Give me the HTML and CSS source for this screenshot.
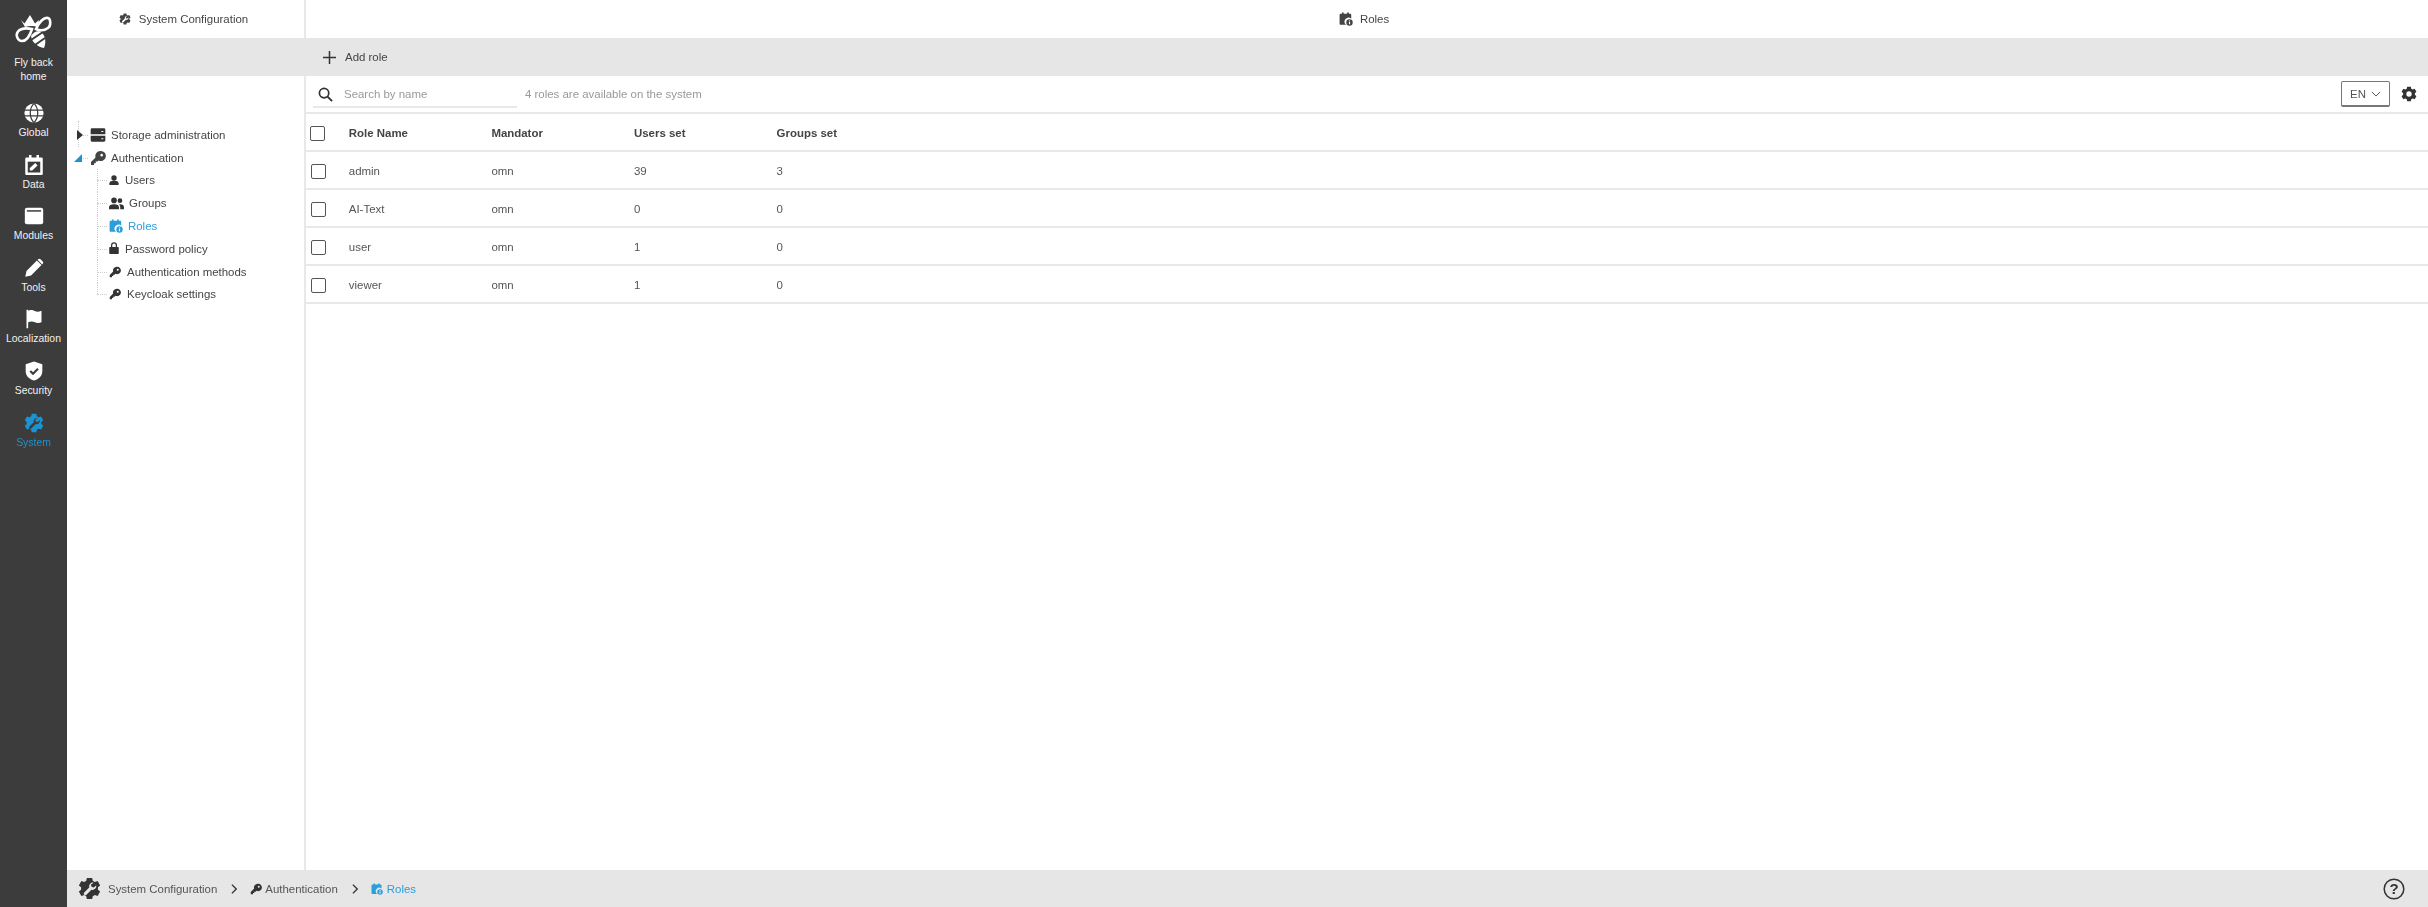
FILE: index.html
```html
<!DOCTYPE html>
<html lang="en">
<head>
<meta charset="utf-8">
<title>Roles</title>
<link rel="stylesheet" href="styles.css">
</head>
<body>
<svg class="defs" width="0" height="0">
  <defs>
    <symbol id="i-key" viewBox="0 0 24 24"><path d="M15.500 1.500a7.500 7.500 0 0 0-7.200 9.700L1.500 18v4.500H6v-2.600h2.600v-2.600h2.600l1.600-1.700a7.500 7.500 0 1 0 2.700-14.100zm2 4.200a2 2 0 1 1 0 4 2 2 0 0 1 0-4z"/></symbol>
    <symbol id="i-roles" viewBox="0 0 24 24"><path d="M5 1h3v2h6V1h3v2h2a2 2 0 0 1 2 2v6.200a6.500 6.500 0 0 0-8.800 10.800H3a2 2 0 0 1-2-2V5a2 2 0 0 1 2-2h2z"/><circle cx="18" cy="18" r="5.500"/><rect x="17" y="17" width="2" height="4" fill="#fff"/><rect x="17" y="14.500" width="2" height="1.600" fill="#fff"/></symbol>
    <symbol id="i-gear" viewBox="0 0 24 24"><path fill-rule="evenodd" d="M14.800 1l.6 3 2.200 1.200 2.900-1 2.600 4.600-2.300 2v2.400l2.300 2-2.600 4.600-2.900-1-2.200 1.200-.6 3H9.200l-.6-3-2.200-1.200-2.900 1L.9 15.200l2.300-2v-2.400l-2.300-2 2.600-4.600 2.900 1 2.200-1.200.6-3zM12 8a4 4 0 1 0 0 8 4 4 0 0 0 0-8z"/></symbol>
    <symbol id="i-sys" viewBox="0 0 24 24"><path d="M14.800 1l.6 3 2.200 1.200 2.900-1 2.600 4.600-2.300 2v2.400l2.300 2-2.600 4.600-2.900-1-2.200 1.200-.6 3H9.200l-.6-3-2.200-1.200-2.900 1L.9 15.200l2.300-2v-2.400l-2.300-2 2.600-4.600 2.900 1 2.200-1.200.6-3z"/><path d="M16.500 6a4 4 0 0 0-4.800 5l-5.200 5.200a1.600 1.600 0 0 0 2.300 2.300l5.200-5.200a4 4 0 0 0 5-4.800l-2.400 2.400-2.500-.6-.6-2.500z" fill="var(--cut)"/></symbol>
  </defs>
</svg>
<div class="app">
  <nav class="rail">
    <a class="rail-item logo">
      <svg class="logo-icon" viewBox="0 0 35 35">
        <path d="M20 15c3-7 8-12 12-11 3 1 3 8 0 10-4 3-8 3-12 1z" fill="none" stroke="#fff" stroke-width="2.600"/>
        <path d="M16 15c-5-1-11-1-14 2.500-3 4 0 9.500 4 9.500s7.500-4 10-12z" fill="none" stroke="#fff" stroke-width="2.600"/>
        <path d="M15 22c3-5 8-6 11-3 4 4 4 10 2 15-6-1-12-5-13-12z" fill="#fff"/>
        <path d="M15 26l12-8M19 31l10-7" fill="none" stroke="#3c3c3c" stroke-width="2"/>
        <path d="M5 6l3.500 3.500L14 1l5 8.500L23 6l-1 7c-4-1.500-9-1.500-13 0z" fill="#fff"/>
      </svg>
      <span class="logo-text">Fly back home</span>
    </a>
    <a class="rail-item">
      <svg viewBox="0 0 24 24"><circle cx="12" cy="12" r="11.500" fill="#fff"/><path d="M.5 8.500h23M.5 15.500h23M12 .5c-6 6-6 17 0 23M12 .5c6 6 6 17 0 23" fill="none" stroke="#3c3c3c" stroke-width="1.500"/></svg>
      <span>Global</span>
    </a>
    <a class="rail-item">
      <svg viewBox="0 0 24 24"><path fill="#fff" d="M6 0h3v3h6V0h3v3h3a1.500 1.500 0 0 1 1.500 1.500v18A1.500 1.500 0 0 1 21 24H3a1.500 1.500 0 0 1-1.500-1.500v-18A1.500 1.500 0 0 1 3 3h3z"/><rect x="4.500" y="8" width="15" height="13" fill="#3c3c3c"/><path fill="#fff" d="M7 18.500v-2.800l6.500-6 2.800 2.800-6.500 6z"/></svg>
      <span>Data</span>
    </a>
    <a class="rail-item">
      <svg viewBox="0 0 24 24"><rect x="1" y="2" width="22" height="20" rx="2.500" fill="#fff"/><rect x="3.500" y="5" width="17" height="1.800" fill="#3c3c3c"/></svg>
      <span>Modules</span>
    </a>
    <a class="rail-item">
      <svg viewBox="0 0 24 24"><path fill="#fff" d="M1.500 22.500l1.500-7L15.500 3l5.500 5.500L8.500 21zM17 1.500a2 2 0 0 1 2.800 0l2.700 2.700a2 2 0 0 1 0 2.800l-.7.700-5.500-5.500z"/></svg>
      <span>Tools</span>
    </a>
    <a class="rail-item">
      <svg viewBox="0 0 24 24"><path fill="#fff" d="M3 1h2v1c3-1.500 6-.5 8 .5s5 1 8-.5v14c-3 1.500-6 1-8 0s-5-1.500-8 0V23H3z"/></svg>
      <span>Localization</span>
    </a>
    <a class="rail-item">
      <svg viewBox="0 0 24 24"><path fill="#fff" d="M12 .5l10 3.500v8c0 6-4.500 10-10 11.500C6.500 22 2 18 2 12V4z"/><path fill="none" stroke="#3c3c3c" stroke-width="2.500" d="M7.500 12l3.300 3.300 6-6"/></svg>
      <span>Security</span>
    </a>
    <a class="rail-item is-active">
      <svg class="sys-active"><use href="#i-sys"/></svg>
      <span>System</span>
    </a>
  </nav>

  <div class="main">
    <header class="topbar">
      <div class="top-left"><svg class="ic-12 sys-dark"><use href="#i-sys"/></svg>System Configuration</div>
      <div class="top-right"><svg class="ic-14"><use href="#i-roles"/></svg>Roles</div>
    </header>
    <div class="toolbar">
      <div class="toolbar-side"></div>
      <button class="add-btn">
        <svg viewBox="0 0 13 13" class="plus"><path d="M6.500 0v13M0 6.500h13" stroke="#333" stroke-width="1.500"/></svg>
        Add role
      </button>
    </div>
    <div class="content">
      <aside class="tree">
        <div class="tree-row lvl0 lvl0-first">
          <span class="caret-right"></span>
          <svg class="ic-16 store" viewBox="0 0 24 24"><path fill-rule="evenodd" d="M3 2h18a2 2 0 0 1 2 2v7H1V4a2 2 0 0 1 2-2zm-2 11h22v7a2 2 0 0 1-2 2H3a2 2 0 0 1-2-2zm16-7v1.500h3V6zm0 11v1.500h3V17z"/></svg>
          <span>Storage administration</span>
        </div>
        <div class="tree-row lvl0">
          <span class="caret-open"></span>
          <svg class="ic-16"><use href="#i-key"/></svg>
          <span>Authentication</span>
        </div>
        <ul class="tree-kids">
          <li class="tree-row kid kid-wide"><svg class="ic-10" viewBox="0 0 24 24"><circle cx="12" cy="7" r="6.500"/><path d="M1 24v-4c0-4 4-6 11-6s11 2 11 6v4z"/></svg><span>Users</span></li>
          <li class="tree-row kid"><svg class="ic-15" viewBox="0 0 24 20"><circle cx="8" cy="5" r="4.500"/><circle cx="17.500" cy="5.500" r="3.800"/><path d="M0 19v-3c0-3 3-5 8-5s8 2 8 5v3zM18 19v-3c0-2-.8-3.500-2-4.600 5-.7 8 1.200 8 4.600v3z"/></svg><span>Groups</span></li>
          <li class="tree-row kid is-current"><svg class="ic-14"><use href="#i-roles"/></svg><span>Roles</span></li>
          <li class="tree-row kid kid-wide"><svg class="ic-10 lock" viewBox="0 0 20 24"><path d="M2 10h2V6.500a6 6 0 0 1 12 0V10h2a1.500 1.500 0 0 1 1.500 1.500v11A1.500 1.500 0 0 1 18 24H2a1.500 1.500 0 0 1-1.500-1.500v-11A1.500 1.500 0 0 1 2 10zm4.500 0h7V6.500a3.500 3.500 0 0 0-7 0z" fill-rule="evenodd"/></svg><span>Password policy</span></li>
          <li class="tree-row kid kid-wide"><svg class="ic-12"><use href="#i-key"/></svg><span>Authentication methods</span></li>
          <li class="tree-row kid kid-wide"><svg class="ic-12"><use href="#i-key"/></svg><span>Keycloak settings</span></li>
        </ul>
      </aside>
      <section class="pane">
        <div class="filter">
          <label class="search">
            <svg viewBox="0 0 16 16" class="search-ic"><circle cx="6.500" cy="6.500" r="5" fill="none" stroke="#333" stroke-width="1.800"/><path d="M10.200 10.200L15 15" stroke="#333" stroke-width="2"/></svg>
            <span class="placeholder">Search by name</span>
          </label>
          <span class="count">4 roles are available on the system</span>
          <div class="filter-end">
            <span class="lang">EN<svg viewBox="0 0 12 7" class="chev"><path d="M1 1l5 5 5-5" fill="none" stroke="#555" stroke-width="1.200"/></svg></span>
            <svg class="gear"><use href="#i-gear"/></svg>
          </div>
        </div>
        <table class="roles">
          <thead>
            <tr><th class="cb-col"><span class="cb cb-head"></span></th><th>Role Name</th><th>Mandator</th><th>Users set</th><th>Groups set</th><th class="rest"></th></tr>
          </thead>
          <tbody>
            <tr><td class="cb-col"><span class="cb"></span></td><td>admin</td><td>omn</td><td>39</td><td>3</td><td></td></tr>
            <tr><td class="cb-col"><span class="cb"></span></td><td>AI-Text</td><td>omn</td><td>0</td><td>0</td><td></td></tr>
            <tr><td class="cb-col"><span class="cb"></span></td><td>user</td><td>omn</td><td>1</td><td>0</td><td></td></tr>
            <tr><td class="cb-col"><span class="cb"></span></td><td>viewer</td><td>omn</td><td>1</td><td>0</td><td></td></tr>
          </tbody>
        </table>
      </section>
    </div>
    <footer class="crumbs">
      <svg class="crumb-sys sys-grey"><use href="#i-sys"/></svg>
      <span>System Configuration</span>
      <svg class="sep" viewBox="0 0 8 12"><path d="M1 1l5 5-5 5" fill="none" stroke="#333" stroke-width="1.600"/></svg>
      <svg class="ic-12"><use href="#i-key"/></svg>
      <span>Authentication</span>
      <svg class="sep" viewBox="0 0 8 12"><path d="M1 1l5 5-5 5" fill="none" stroke="#333" stroke-width="1.600"/></svg>
      <span class="crumb-now"><svg class="ic-12"><use href="#i-roles"/></svg>Roles</span>
      <svg class="help" viewBox="0 0 22 22"><circle cx="11" cy="11" r="9.800" fill="none" stroke="#333" stroke-width="1.500"/><text x="11" y="16" text-anchor="middle" class="help-q">?</text></svg>
    </footer>
  </div>
</div>
</body>
</html>
```
FILE: styles.css
```css
* { box-sizing: border-box; }
html, body { margin: 0; height: 100%; }
body { font-family: "Liberation Sans", Arial, sans-serif; font-size: 11.45px; color: #444; background: #fff; overflow: hidden; }
.defs { display: block; height: 0; width: 0; }
svg { fill: currentColor; flex: none; }
.app { display: flex; height: 907px; filter: blur(0.4px); }

.rail { width: 67px; flex: none; background: #3c3c3c; color: #fff; display: flex; flex-direction: column; align-items: center; padding-top: 14px; font-size: 10.4px; }
.rail-item { width: 100%; height: 51.6px; flex: none; display: flex; flex-direction: column; align-items: center; gap: 3px; text-align: center; color: #f2f2f2; line-height: 13px; }
.rail-item svg { width: 20px; height: 20px; }
.rail-item.logo { height: 89px; gap: 7px; }
.rail-item .logo-icon { width: 35px; height: 35px; overflow: visible; }
.logo-text { width: 50px; line-height: 14px; }
.rail-item.is-active { color: #1a93d2; }
.sys-active { color: #1a93d2; --cut: #3c3c3c; }
.sys-dark { --cut: #fff; color: #444; }
.sys-grey { --cut: #e6e6e6; color: #333; }

.main { flex: 1; min-width: 0; display: flex; flex-direction: column; }
.topbar { height: 38px; display: flex; flex: none; }
.top-left { width: 239px; flex: none; display: flex; align-items: center; justify-content: center; gap: 8px; padding-right: 4px; border-right: 2px solid #e8e8e8; }
.top-right { flex: 1; display: flex; align-items: center; justify-content: center; gap: 7px; padding-right: 6px; }
.ic-10 { width: 10px; height: 12px; }
.ic-12 { width: 12px; height: 12px; }
.ic-14 { width: 14px; height: 14px; }
.ic-15 { width: 15px; height: 13px; }
.ic-16 { width: 16px; height: 16px; }

.toolbar { height: 38px; flex: none; background: #e6e6e6; display: flex; align-items: center; }
.toolbar-side { width: 239px; flex: none; height: 100%; }
.add-btn { display: flex; align-items: center; gap: 9px; border: 0; background: none; padding: 0 0 0 17px; font: inherit; color: #444; }
.plus { width: 13px; height: 13px; }

.content { flex: 1; min-height: 0; display: flex; }
.tree { width: 239px; flex: none; border-right: 2px solid #e8e8e8; padding: 47.5px 0 0 0; }
.tree-row { height: 22.8px; display: flex; align-items: center; position: relative; }
.lvl0 { padding-left: 10px; }
.lvl0 svg { margin-right: 5px; }
.lvl0::before { content: ""; position: absolute; left: 13px; top: 50%; width: 8px; border-top: 1px dotted #ccc; }
.lvl0-first::after { content: ""; position: absolute; left: 11px; top: -3px; height: 26px; border-left: 1px dotted #ccc; }
.caret-right { width: 0; height: 0; border-left: 6px solid #333; border-top: 5px solid transparent; border-bottom: 5px solid transparent; margin-right: 7px; position: relative; z-index: 1; }
.caret-open { width: 0; height: 0; border-right: 8px solid #1a93d2; border-top: 8px solid transparent; margin: 0 8px 0 -3px; position: relative; z-index: 1; }
.store { color: #333; }
.tree-kids { list-style: none; margin: 0; padding: 0 0 0 30px; }
.kid { padding-left: 12px; gap: 5px; }
.kid::before { content: ""; position: absolute; left: 0; top: 50%; width: 10px; border-top: 1px dotted #ccc; }
.kid::after { content: ""; position: absolute; left: 0; top: 0; bottom: 0; border-left: 1px dotted #ccc; }
.kid:last-child::after { bottom: 50%; }
.kid svg { color: #333; }
.kid-wide { gap: 6px; }
.is-current, .kid.is-current svg { color: #2a9fdb; }
.lock { position: relative; top: -1px; }

.pane { flex: 1; min-width: 0; display: flex; flex-direction: column; }
.filter { height: 38px; flex: none; display: flex; align-items: center; border-bottom: 2px solid #e8e8e8; padding: 0 11px 0 7px; }
.search { width: 204px; height: 32px; align-self: flex-start; display: flex; align-items: center; gap: 11px; padding: 6px 0 0 5px; border-bottom: 2px solid #e8e8e8; }
.search-ic { width: 15px; height: 15px; }
.placeholder { color: #9a9a9a; }
.count { color: #999; margin-left: 8px; }
.filter-end { margin-left: auto; display: flex; align-items: center; gap: 11px; }
.lang { width: 49px; height: 26px; border: 1px solid #777; border-bottom-width: 2px; border-radius: 2px; display: flex; align-items: center; justify-content: center; gap: 5px; color: #555; }
.chev { width: 10px; height: 6px; }
.gear { width: 16px; height: 16px; color: #333; }

.roles { width: 100%; border-collapse: collapse; table-layout: fixed; }
.roles th, .roles td { height: 38px; padding: 2px 0 0; text-align: left; border-bottom: 2px solid #e8e8e8; }
.roles th { font-weight: bold; color: #444; height: 37px; }
.roles th:nth-child(2), .roles th:nth-child(3), .roles th:nth-child(4), .roles th:nth-child(5) { width: 142.6px; }
.roles td { color: #555; }
.roles th.cb-col, .roles td.cb-col { width: 42.8px; }
.cb { display: block; width: 15px; height: 15px; border: 1.5px solid #555; border-radius: 2px; margin-left: 5px; background: #fff; }
.cb-head { margin-left: 4px; }

.crumbs { height: 37px; flex: none; background: #e6e6e6; display: flex; align-items: center; padding: 0 23px 0 11px; color: #555; }
.crumb-sys { width: 23px; height: 23px; margin-right: 7px; }
.sep { width: 7px; height: 12px; margin: 0 12px 0 14px; }
.crumbs .ic-12 { margin-right: 3px; color: #333; }
.crumb-now { display: flex; align-items: center; gap: 4px; color: #2a9fdb; }
.crumbs .crumb-now .ic-12 { color: #2a9fdb; margin-right: 0; }
.help { width: 22px; height: 22px; margin-left: auto; }
.help-q { font-size: 15px; font-weight: bold; fill: #333; }
```
